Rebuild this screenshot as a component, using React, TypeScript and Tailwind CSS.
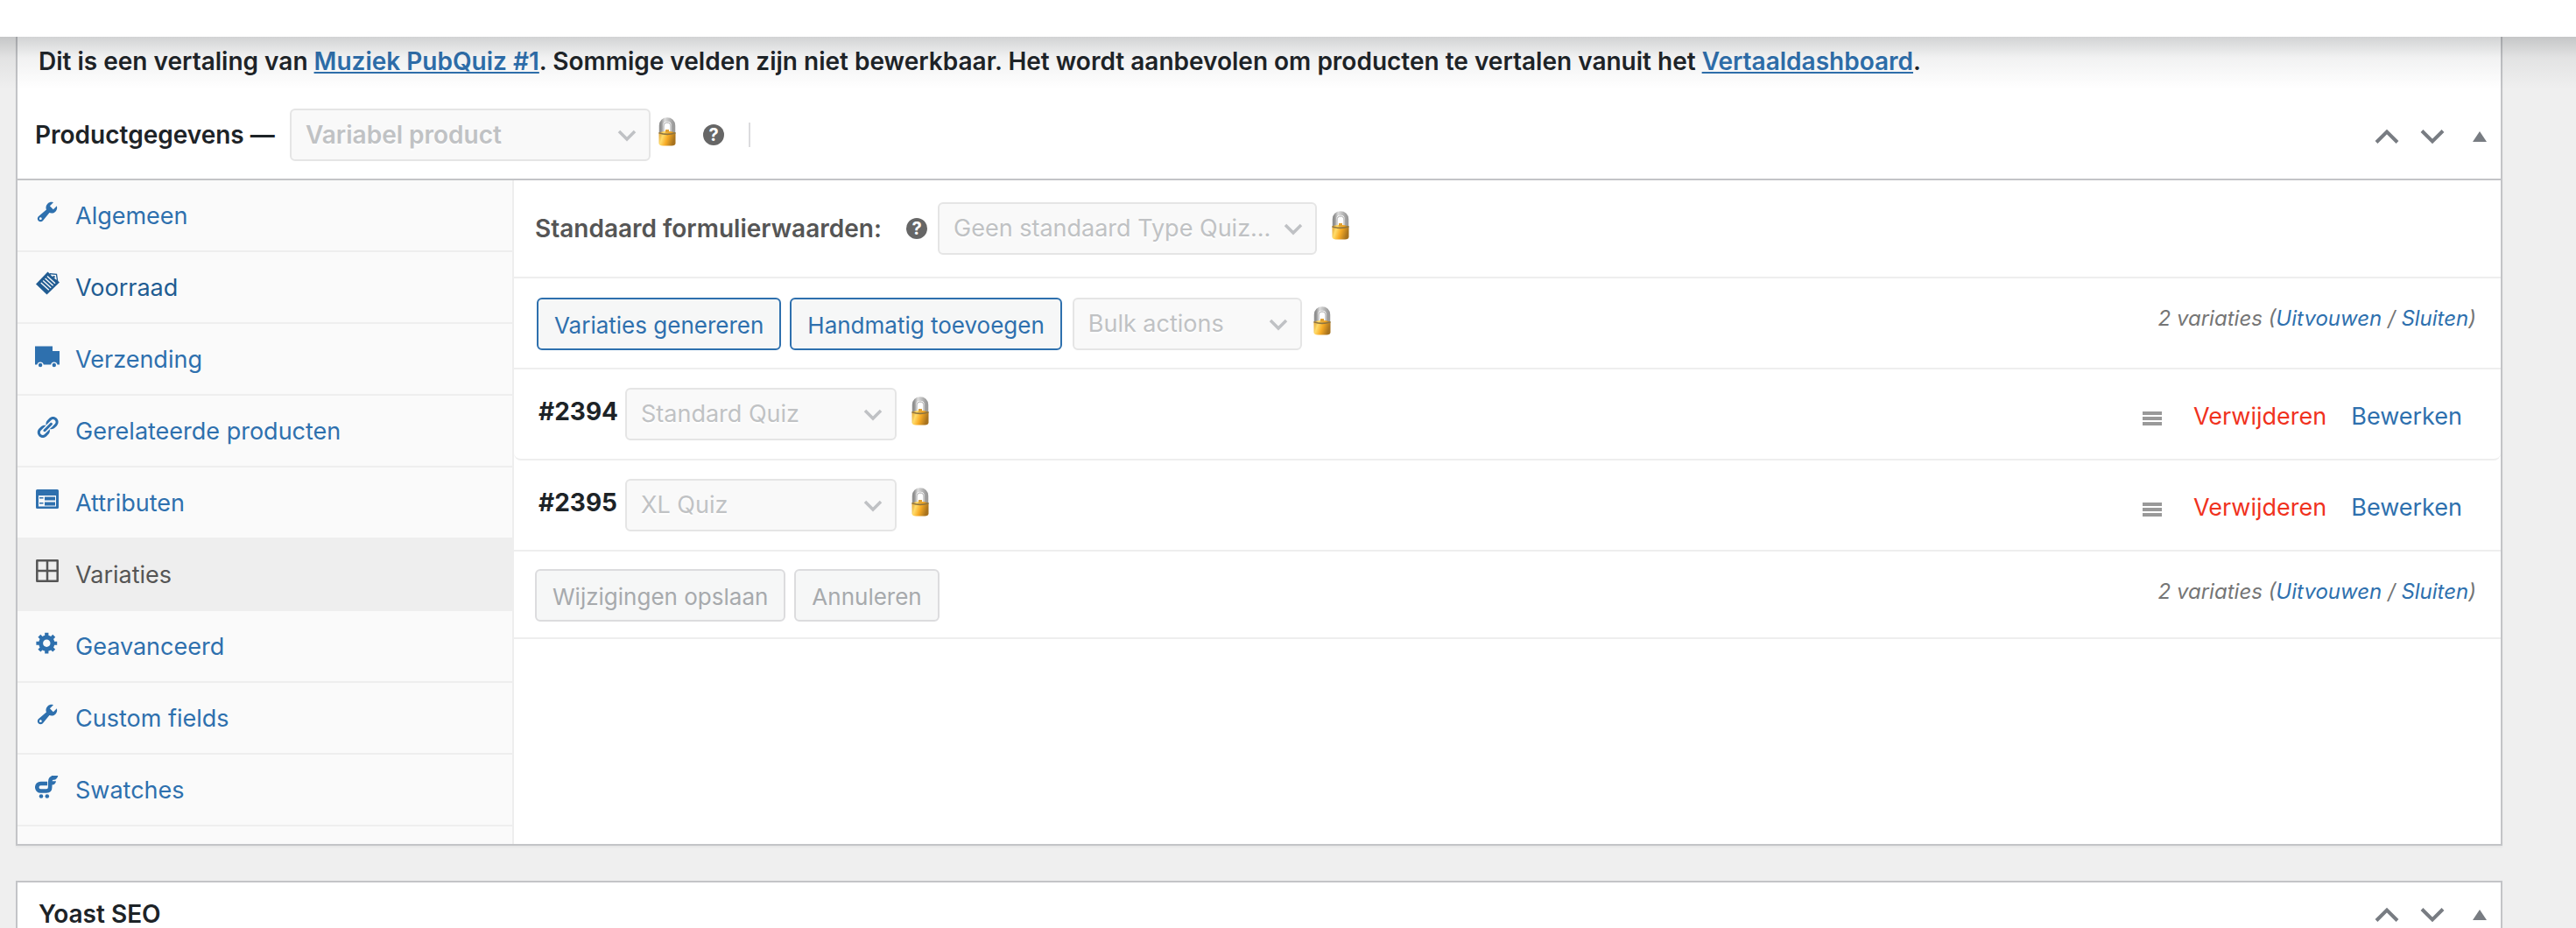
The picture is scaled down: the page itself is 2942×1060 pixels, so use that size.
import { ReactNode } from "react";
import clsx from "clsx";

type iconPropsType = {
   className?: string,
}

type tabType = {
   title: string,
   icon: ReactNode,
   active?: boolean,
   hovered?: boolean,
}

type lockedSelectPropsType = {
   id: string,
   label?: string,
   value: string,
   className: string,
   bold?: boolean,
}

const wrenchPath = "M16.68 9.77c-1.34 1.34-3.3 1.67-4.95.99l-5.41 6.52c-.99.99-2.59.99-3.58 0s-.99-2.59 0-3.57l6.52-5.42c-.68-1.65-.35-3.61.99-4.95 1.28-1.28 3.12-1.62 4.72-1.06l-2.89 2.89 2.82 2.82 2.86-2.87c.53 1.58.18 3.39-1.08 4.65zM3.81 16.21c.4.39 1.04.39 1.43 0 .4-.4.4-1.04 0-1.43-.39-.4-1.03-.4-1.43 0-.39.39-.39 1.03 0 1.43z";
const gearPath = "M18 12h-2.18c-.17.7-.44 1.35-.81 1.93l1.54 1.54-2.1 2.1-1.54-1.54c-.58.36-1.23.63-1.91.79V19H8v-2.18c-.68-.16-1.33-.43-1.91-.79l-1.54 1.54-2.12-2.12 1.54-1.54c-.36-.58-.63-1.23-.79-1.91H1V9.03h2.17c.16-.7.44-1.35.8-1.94L2.43 5.55l2.1-2.1 1.54 1.54c.58-.37 1.24-.64 1.93-.81V2h3v2.18c.68.16 1.33.43 1.91.79l1.54-1.54 2.12 2.12-1.54 1.54c.36.59.64 1.24.8 1.94H18V12zm-8.5 1.5c1.66 0 3-1.34 3-3s-1.34-3-3-3-3 1.34-3 3 1.34 3 3 3z";
const linkPath = "M17.74 2.76c1.68 1.69 1.68 4.41 0 6.1l-1.53 1.52c-1.12 1.12-2.7 1.47-4.14 1.09l2.62-2.61.76-.77.76-.76c.84-.84.84-2.2 0-3.04-.84-.85-2.2-.85-3.04 0l-.77.76-3.38 3.38c-.37-1.44-.02-3.02 1.1-4.14l1.52-1.53c1.69-1.68 4.42-1.68 6.1 0zM8.59 13.43l5.34-5.34c.42-.42.42-1.1 0-1.52-.44-.43-1.13-.39-1.53 0l-5.33 5.34c-.42.42-.42 1.1 0 1.52.44.43 1.13.39 1.52 0zm-.76 2.29l4.14-4.15c.38 1.44.03 3.02-1.09 4.14l-1.52 1.53c-1.69 1.68-4.41 1.68-6.1 0-1.68-1.68-1.68-4.42 0-6.1l1.53-1.52c1.12-1.12 2.7-1.47 4.14-1.1l-4.14 4.15c-.85.84-.85 2.2 0 3.05.84.84 2.2.84 3.04 0z";

function Dashicon({ path }: { path: string }) {
   return (
      <svg viewBox="0 0 20 20" className="size-7 shrink-0" fill="currentColor" aria-hidden="true">
         <path d={path} />
      </svg>
   )
}

function TabIcon({ children }: { children: ReactNode }) {
   return (
      <svg viewBox="0 0 28 28" className="size-7 shrink-0" fill="currentColor" aria-hidden="true">
         {children}
      </svg>
   )
}

const tabs: tabType[] = [
   { title: "Algemeen", icon: <Dashicon path={wrenchPath} /> },
   {
      title: "Voorraad",
      hovered: true,
      icon: <TabIcon>
         <path d="M14.5 0.5 28 12.5 13.5 26.5 1 14.5Z" />
         <path d="M17 2.8 24.5 3.4 25.6 11" fill="none" stroke="currentColor" strokeWidth="1.4" />
         <path d="M17.5 3.8 23.8 4.3 24.4 9.8Z" fill="#fafafa" />
         <circle cx="21.5" cy="6.3" r="1.3" />
         <path d="M14 5.5 23 13.8M11.6 8 20.6 16.3M9.2 10.5 18.2 18.8M6.8 13 15.8 21.3" stroke="#fafafa" strokeWidth="1.4" />
      </TabIcon>
   },
   {
      title: "Verzending",
      icon: <TabIcon>
         <path d="M0 3.5h20v5.5h8v15.5h-2.5a3.8 3.8 0 0 0-7.4 0H9.8a3.8 3.8 0 0 0-7.4 0H0Z" />
         <circle cx="6.1" cy="25" r="2.2" />
         <circle cx="21.8" cy="25" r="2.2" />
      </TabIcon>
   },
   { title: "Gerelateerde producten", icon: <Dashicon path={linkPath} /> },
   {
      title: "Attributen",
      icon: <TabIcon>
         <path d="M2.5 3h23A1.5 1.5 0 0 1 27 4.5v19A1.5 1.5 0 0 1 25.5 25h-23A1.5 1.5 0 0 1 1 23.5v-19A1.5 1.5 0 0 1 2.5 3Z" />
         <path d="M4 10h20v12.5H4Z" fill="#fafafa" />
         <path d="M5 12h4.5v1.5H5zM5 18h4.5v1.5H5zM11 11.5h12v4H11zM11 17.5h12v4H11z" />
      </TabIcon>
   },
   {
      title: "Variaties",
      active: true,
      icon: <TabIcon>
         <path d="M2.3 2.3h23.4v23.4H2.3ZM14 2v24M2 14h24" fill="none" stroke="currentColor" strokeWidth="2.5" strokeLinejoin="round" />
      </TabIcon>
   },
   { title: "Geavanceerd", icon: <Dashicon path={gearPath} /> },
   { title: "Custom fields", icon: <Dashicon path={wrenchPath} /> },
   {
      title: "Swatches",
      icon: <TabIcon>
         <path d="M14 11H6.5a4.25 4.25 0 0 0 0 8.5H13c3 0 4.2-1.5 4.2-4.5V9.5C17.2 6 18.5 4.3 21.5 4.3h2" fill="none" stroke="currentColor" strokeWidth="4.6" />
         <path d="M19 2h7.3c-.6 2.6-2 4.3-4.6 4.6H19ZM18 8.2h6c-.4 2.6-1.8 4.1-4.4 4.3H18Z" />
         <circle cx="7" cy="25.5" r="2.3" />
         <circle cx="13.8" cy="25.5" r="2.3" />
      </TabIcon>
   },
];

const variations = [
   { id: "2394", type: "Standard Quiz" },
   { id: "2395", type: "XL Quiz" },
];

function LockIcon({ className }: iconPropsType) {
   return (
      <svg viewBox="0 0 22 34" className={clsx("mt-2.5 h-[34px] w-[22px] shrink-0 self-start", className)} role="img" aria-label="Vergrendeld">
         <defs>
            <linearGradient id="lock-body" x1="0" x2="1" y1="0" y2="0.3">
               <stop offset="0" stopColor="#d9962a" />
               <stop offset="0.3" stopColor="#ffdc6b" />
               <stop offset="0.6" stopColor="#f7ab25" />
               <stop offset="1" stopColor="#a8731f" />
            </linearGradient>
            <linearGradient id="lock-shackle" x1="0" x2="1" y1="0" y2="0">
               <stop offset="0" stopColor="#8f8f8f" />
               <stop offset="0.3" stopColor="#dcdcdc" />
               <stop offset="1" stopColor="#9a9a9a" />
            </linearGradient>
         </defs>
         <path d="M4 18V9.5C4 5 7 2.5 11 2.5s7 2.5 7 7V18" fill="none" stroke="url(#lock-shackle)" strokeWidth="4.5" />
         <path d="M7 17V10c0-2.5 1.5-4 4-4s4 1.5 4 4v7" fill="none" stroke="#a3a3a3" strokeWidth="1" />
         <path d="M1.5 17.5Q11 14 20.5 17.5V29.5Q20.5 32.5 16 32.5H6Q1.5 32.5 1.5 29.5Z" fill="url(#lock-body)" />
         <path d="M1.5 17.8Q11 21 20.5 17.8" fill="none" stroke="#8d7440" strokeWidth="1.6" />
         <path d="M9 14h4v3.5H9z" fill="#e0a030" />
      </svg>
   )
}

function HelpTip({ className }: iconPropsType) {
   return (
      <span className={clsx("flex size-6 shrink-0 items-center justify-center rounded-full bg-[#666] text-xl font-bold text-white", className)}>
         ?
      </span>
   )
}

function LockedSelect({ id, label, value, className, bold }: lockedSelectPropsType) {
   return (
      <span className={clsx("relative flex h-15 shrink-0", className)}>
         <select
            id={id}
            aria-label={label}
            disabled
            defaultValue={value}
            className={clsx(
               "h-full w-full appearance-none rounded-md border-2 border-[#e5e5e5] bg-[#f9f9f9] pr-10 pl-4 text-[#c0c2c4] opacity-100 text-shadow-[0_2px_0_#fff]",
               bold ? "text-[28px] font-semibold" : "text-[27px]"
            )}
         >
            <option>{value}</option>
         </select>
         <svg viewBox="0 0 22 14" className="pointer-events-none absolute top-6 right-4 h-3.5 w-[22px]" aria-hidden="true">
            <path d="M2 2 11 11 20 2" fill="none" stroke="#bfc1c4" strokeWidth="3.5" />
         </svg>
      </span>
   )
}

function PanelActions() {
   return (
      <div className="flex items-center pt-1 text-[#787c82]">
         <button type="button" aria-label="Omhoog verplaatsen" className="p-3">
            <svg viewBox="0 0 28 18" className="h-[18px] w-7" aria-hidden="true">
               <path d="M2 15.5 14 3.5 26 15.5" fill="none" stroke="currentColor" strokeWidth="4" />
            </svg>
         </button>
         <button type="button" aria-label="Omlaag verplaatsen" className="p-3">
            <svg viewBox="0 0 28 18" className="h-[18px] w-7" aria-hidden="true">
               <path d="M2 2.5 14 14.5 26 2.5" fill="none" stroke="currentColor" strokeWidth="4" />
            </svg>
         </button>
         <button type="button" aria-label="Paneel in- of uitklappen" className="py-3 pr-4 pl-5">
            <svg viewBox="0 0 16 12" className="h-3 w-4" fill="currentColor" aria-hidden="true">
               <path d="M8 0 16 12H0Z" />
            </svg>
         </button>
      </div>
   )
}

function VariationCount() {
   return (
      <p className="text-2xl text-[#757575] italic">
         2 variaties (<a href="#uitvouwen" className="text-[#2e70ae]">Uitvouwen</a> / <a href="#sluiten" className="text-[#2e70ae]">Sluiten</a>)
      </p>
   )
}

function Tab({ title, icon, active, hovered }: tabType) {
   return (
      <li>
         <a
            href="#tab"
            className={clsx(
               "flex h-[82px] items-start gap-[18px] border-b-2 border-[#eee] pt-[22px] pl-5",
               active ? "bg-[#eee] text-[#555]" : hovered ? "text-[#215c92]" : "text-[#2e70ae]"
            )}
         >
            {icon}
            <span className="text-[27px] leading-[38px]">{title}</span>
         </a>
      </li>
   )
}

function ProductPanel() {
   return (
      <section className="border-2 border-t-0 border-[#c3c4c7] bg-white shadow-[0_2px_2px_rgba(0,0,0,0.04)]">
         <header className="border-b-2 border-[#c3c4c7] pt-2 pb-5 text-[28px] font-semibold text-[#1d2327]">
            <p className="pl-6 leading-10">
               Dit is een vertaling van <a href="#product" className="text-[#2e70ae] underline">Muziek PubQuiz #1</a>. Sommige velden zijn niet bewerkbaar. Het wordt aanbevolen om producten te vertalen vanuit het <a href="#dashboard" className="text-[#2e70ae] underline">Vertaaldashboard</a>.
            </p>
            <div className="flex items-center justify-between pt-[34px] pl-5">
               <div className="flex items-center">
                  <label htmlFor="product-type" className="w-[291px] whitespace-nowrap">Productgegevens —</label>
                  <LockedSelect id="product-type" value="Variabel product" className="w-[412px]" bold />
                  <LockIcon className="ml-2" />
                  <HelpTip className="ml-[30px]" />
                  <span className="ml-7 h-7 w-0.5 bg-[#dcdcde]" />
               </div>
               <PanelActions />
            </div>
         </header>

         <div className="flex min-h-[758px]">
            <nav className="w-[567px] shrink-0 border-r-2 border-[#eee] bg-[#fafafa]">
               <ul>
                  {tabs.map(tab => <Tab key={tab.title} {...tab} />)}
               </ul>
            </nav>

            <div className="min-w-0 flex-1">
               <div className="flex items-center border-b-2 border-[#eee] py-[25px] pl-6">
                  <label htmlFor="default-type" className="w-[424px] text-[28px] font-semibold whitespace-nowrap text-[#555]">Standaard formulierwaarden:</label>
                  <HelpTip />
                  <LockedSelect id="default-type" value="Geen standaard Type Quiz..." className="ml-3 w-[433px]" />
                  <LockIcon className="ml-4" />
               </div>

               <div className="flex items-center justify-between border-b-2 border-[#eee] pt-[22px] pr-7 pb-5 pl-[26px]">
                  <div className="flex">
                     <button type="button" className="mr-2.5 h-15 rounded-md border-2 border-[#2e70ae] bg-[#f6f7f7] px-[18px] pt-0.5 text-[26px] text-[#2e70ae]">Variaties genereren</button>
                     <button type="button" className="mr-3 h-15 rounded-md border-2 border-[#2e70ae] bg-[#f6f7f7] px-[18px] pt-0.5 text-[26px] text-[#2e70ae]">Handmatig toevoegen</button>
                     <LockedSelect id="bulk" label="Bulk actions" value="Bulk actions" className="w-[262px]" />
                     <LockIcon className="ml-3" />
                  </div>
                  <div className="pb-3"><VariationCount /></div>
               </div>

               {variations.map(({ id, type }, index) => (
                  <div key={id} className={clsx("flex items-center justify-between border-b-2 border-[#eee] py-[21px] pr-11 pl-7 text-[27px]", index === 0 && "rounded-b-lg")}>
                     <div className="flex">
                        <label htmlFor={"type-" + id} className="w-[99px] text-[28px] leading-[54px] font-bold text-[#1d2327]">#{id}</label>
                        <LockedSelect id={"type-" + id} value={type} className="w-[310px]" />
                        <LockIcon className="ml-4" />
                     </div>
                     <div className="flex items-center pt-1.5">
                        <svg viewBox="0 0 22 16" className="mt-1 mr-9 h-4 w-[22px] text-[#999]" fill="currentColor" aria-hidden="true">
                           <path d="M0 0h22v4H0zM0 6h22v4H0zM0 12h22v4H0z" />
                        </svg>
                        <a href="#verwijderen" className="mr-7 text-[#f0321e]">Verwijderen</a>
                        <a href="#bewerken" className="text-[#2e70ae]">Bewerken</a>
                     </div>
                  </div>
               ))}

               <div className="flex items-center justify-between border-b-2 border-[#eee] pt-5 pr-7 pb-[18px] pl-6">
                  <div className="flex gap-2.5">
                     <button type="button" disabled className="h-15 rounded-md border-2 border-[#dcdcde] bg-[#f6f7f7] px-[18px] pt-0.5 text-[26px] text-[#a7aaad]">Wijzigingen opslaan</button>
                     <button type="button" disabled className="h-15 rounded-md border-2 border-[#dcdcde] bg-[#f6f7f7] px-[18px] pt-0.5 text-[26px] text-[#a7aaad]">Annuleren</button>
                  </div>
                  <div className="pb-2"><VariationCount /></div>
               </div>
            </div>
         </div>
      </section>
   )
}

export default function App() {
   return (
      <div className="flex min-h-screen flex-col bg-[#efefef] font-['Inter','Liberation_Sans',sans-serif]">
         <div className="relative h-[42px] bg-white">
            {/* shadow that the toolbar casts over the panel */}
            <div className="pointer-events-none absolute inset-x-0 top-full h-15 bg-linear-to-b from-[#1d2327]/20 via-[#1d2327]/6 via-40% to-transparent" />
         </div>
         <main className="flex flex-1 flex-col pr-[84px] pl-[18px]">
            <ProductPanel />
            <section className="mt-10 flex flex-1 items-start justify-between border-2 border-b-0 border-[#c3c4c7] bg-white pl-6">
               <h2 className="-mb-4 pt-4 text-[28px] leading-10 font-semibold text-[#1d2327]">Yoast SEO</h2>
               <div className="-mb-4 pt-3"><PanelActions /></div>
            </section>
         </main>
      </div>
   )
}
